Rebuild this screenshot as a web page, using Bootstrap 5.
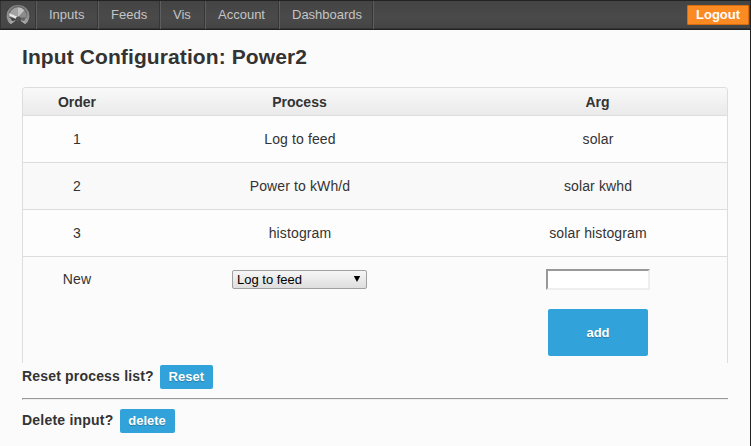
<!DOCTYPE html>
<html lang="en">
<head>
<meta charset="utf-8">
<meta name="viewport" content="width=device-width, initial-scale=1">
<title>Input Configuration</title>
<link href="https://cdn.jsdelivr.net/npm/bootstrap@5.3.0/dist/css/bootstrap.min.css" rel="stylesheet">
<style>
body{font:14px/20px "Liberation Sans",Arial,sans-serif;color:#333;background:#fbfbfb;height:446px;overflow:hidden;border-right:1px solid #222}
.topbar{height:30px;padding:0;background:linear-gradient(#444,#4a4a4a 60%,#444);border-top:1px solid #222;border-bottom:1px solid #222;box-shadow:inset 0 -1px #333;align-items:stretch;flex-wrap:nowrap}
.topbar .brand-cell{width:36px;border-right:1px solid #363636;border-left:1px solid #333;padding:1px 0 0 4px}
.topbar .brand-cell svg{display:block}
.topbar .nav-link{font-size:13px;line-height:28px;padding:0 12px;color:#c4c4c4;border-left:1px solid #5e5e5e;border-right:1px solid #363636;white-space:nowrap}
.topbar .nav-end{border-left:1px solid #5e5e5e}
.w-inputs{width:62px}.w-feeds{width:62px}.w-vis{width:45px}.w-account{width:74px}.w-dash{width:94px}
.btn-logout{height:20px;margin:4px 1px 0 auto;padding:0 8px;border:1px solid #d96c0c;border-radius:1px;background:#fb8a23;color:#fff;font-size:13px;font-weight:bold;line-height:18px;width:62px}
.btn-logout:hover{background:#f57c10;color:#fff}
.page{padding:15px 22px 0}
h1{font-size:21px;font-weight:bold;line-height:24px;margin:0 0 18px;letter-spacing:.1px}
.processes{border:1px solid #ddd;border-bottom:0;border-radius:4px 4px 0 0;table-layout:fixed;width:706px;height:276px;border-collapse:separate;border-spacing:0;text-align:center;margin:0}
.processes th{height:27px;padding:1px 0 0;background:linear-gradient(#f9f9f9,#eaeaea);font-weight:bold}
.processes th:first-child{border-top-left-radius:3px}
.processes th:last-child{border-top-right-radius:3px}
.processes td{height:47px;padding:0 0 1px;border-top:1px solid #ddd;letter-spacing:.12px}
.processes td:nth-child(n+2){padding-left:1px}
.processes tr.odd-row td{background:#fdfdfd}
.processes tr.even-row td{background:#f9f9f9}
.processes tr.new-row td{height:107px;vertical-align:top;padding:12px 0 0}
.pick{appearance:none;display:flex;width:135px;height:19px;margin:1px auto 0;padding:0 5px 0 4px;border:1px solid #a0a0a0;border-radius:2px;background:linear-gradient(#f6f6f6,#dedede);color:#000;font-size:13px;line-height:18px}
.arg{display:block;width:104px;height:21px;margin:0 auto;padding:1px;border:2px solid;border-color:#999 #eee #eee #999;border-radius:0;background:#fff;font-size:13px}
.btn-act{display:inline-block;padding:0;width:55px;height:24px;line-height:24px;border:0;border-radius:2px;background:#32a3da;color:#fff;font-size:13px;font-weight:bold;text-shadow:0 1px 1px rgba(0,0,0,.25)}
.btn-act:hover{background:#2a94c8;color:#fff}
.btn-reset{width:53px}
.btn-add{display:block;width:100px;height:47px;margin:19px auto 0;padding-left:1px}
.reset-line{padding-top:2px}
.ask{margin-right:6px;padding-bottom:2px;letter-spacing:.18px}
.ask-delete{letter-spacing:.22px}
.rule{height:2px;border:0;border-top:1px solid #999;border-bottom:1px solid #eee;border-left:1px solid #999;opacity:1;margin:9px 0}
</style>
</head>
<body>
<nav class="topbar d-flex">
  <a class="brand-cell" href="#" aria-label="Home">
    <svg width="27" height="26" viewBox="0 0 27 26">
      <defs><linearGradient id="rim" x2="0" y2="1"><stop stop-color="#777"/><stop offset="1" stop-color="#a4a4a4"/></linearGradient></defs>
      <path d="M6 23A12 11.5 0 1 1 20 23L17 19.5Q13 17.5 9 19.5Z" fill="url(#rim)" stroke="#383838" stroke-width=".8"/>
      <path d="M6 19.5A9.3 9.3 0 1 1 20 19.5L17.5 18.5H8.5Z" fill="#666"/>
      <path d="M13 15.5 4.3 15A8.8 9 0 0 1 13 5.3Z" fill="#a2a2a2"/>
      <path d="M13 15.5V5.3A8.8 9 0 0 1 19.5 8.5Z" fill="#c2c2c2"/>
      <path d="M13 15.5 19.5 8.5A8.8 9 0 0 1 21.7 15.5Z" fill="#8b8b8b"/>
      <path d="M4.3 11.3 13.5 15.3 12 17.5 4.3 13.5Z" fill="#e8e8e8"/>
      <path d="M5 15.5 12 17.5 8 19.5Z" fill="#444"/>
      <path d="M4.5 16 7 20.5 10 18.8M21.5 16 19 20.5 16 18.8" fill="none" stroke="#bbb" stroke-width=".9"/>
      <circle cx="13.3" cy="17" r="2.6" fill="#505050"/>
    </svg>
  </a>
  <a class="nav-link w-inputs" href="#">Inputs</a>
  <a class="nav-link w-feeds" href="#">Feeds</a>
  <a class="nav-link w-vis" href="#">Vis</a>
  <a class="nav-link w-account" href="#">Account</a>
  <a class="nav-link w-dash" href="#">Dashboards</a>
  <span class="nav-end"></span>
  <a class="btn btn-logout" href="#">Logout</a>
</nav>
<main class="page">
  <h1>Input Configuration: Power2</h1>
  <table class="processes">
    <colgroup><col style="width:108px"><col style="width:337px"><col></colgroup>
    <thead><tr><th>Order</th><th>Process</th><th>Arg</th></tr></thead>
    <tbody>
      <tr class="odd-row"><td>1</td><td>Log to feed</td><td>solar</td></tr>
      <tr class="even-row"><td>2</td><td>Power to kWh/d</td><td>solar kwhd</td></tr>
      <tr class="odd-row"><td>3</td><td>histogram</td><td>solar histogram</td></tr>
      <tr class="new-row">
        <td>New</td>
        <td><button type="button" class="pick justify-content-between"><span>Log to feed</span><svg width="8" height="8" viewBox="0 0 8 8" class="mt-1"><path d="M.8 1H7.2L4 7Z"/></svg></button></td>
        <td><input class="arg" type="text" aria-label="Argument"><button type="button" class="btn btn-act btn-add">add</button></td>
      </tr>
    </tbody>
  </table>
  <div class="d-flex align-items-center reset-line"><b class="ask">Reset process list?</b><button type="button" class="btn btn-act btn-reset">Reset</button></div>
  <hr class="rule">
  <div class="d-flex align-items-center"><b class="ask ask-delete">Delete input?</b><button type="button" class="btn btn-act">delete</button></div>
</main>
<script src="https://cdn.jsdelivr.net/npm/bootstrap@5.3.0/dist/js/bootstrap.bundle.min.js"></script>
</body>
</html>
